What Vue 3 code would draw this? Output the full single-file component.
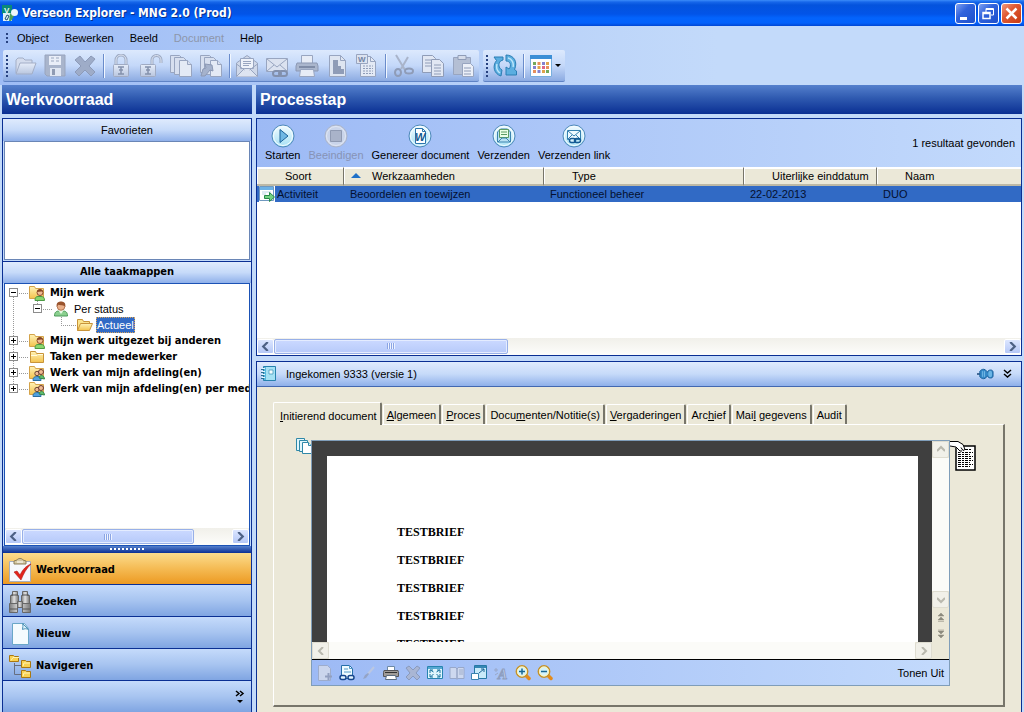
<script setup>
import { ref } from 'vue'

const menus = [
  { label: 'Object' },
  { label: 'Bewerken' },
  { label: 'Beeld' },
  { label: 'Document', disabled: true },
  { label: 'Help' }
]

const toolGroups = [
  [['open', 'Openen'], ['save', 'Opslaan'], ['delete', 'Verwijderen']],
  [['lock', 'Vergrendelen'], ['unlock', 'Ontgrendelen'], ['pages', 'Versies'], ['pages-edit', 'Versie bewerken']],
  [['mail', 'Mail'], ['mail-link', 'Mail link'], ['print', 'Afdrukken'], ['stamp', 'Sjabloon'], ['word', 'Word']],
  [['cut', 'Knippen'], ['copy', 'Kopiëren'], ['paste', 'Plakken']]
]

const tree = [
  { cells: ['minus first'], icon: 'folder-user', label: 'Mijn werk', bold: true },
  { cells: ['line', 'minus child'], icon: 'user', label: 'Per status' },
  { cells: ['line', '', 'elbow'], icon: 'folder-open', label: 'Actueel', selected: true },
  { cells: ['plus'], icon: 'folder-user', label: 'Mijn werk uitgezet bij anderen', bold: true },
  { cells: ['plus'], icon: 'folder', label: 'Taken per medewerker', bold: true },
  { cells: ['plus'], icon: 'folder-group', label: 'Werk van mijn afdeling(en)', bold: true },
  { cells: ['plus last'], icon: 'folder-group', label: 'Werk van mijn afdeling(en) per medewerker', bold: true }
]

const navItems = [
  { icon: 'clipboard', label: 'Werkvoorraad' },
  { icon: 'binoculars', label: 'Zoeken' },
  { icon: 'new', label: 'Nieuw' },
  { icon: 'hierarchy', label: 'Navigeren' }
]
const activeNav = ref(0)

const actions = [
  { icon: 'a-play', label: 'Starten' },
  { icon: 'a-stop', label: 'Beeindigen', disabled: true },
  { icon: 'a-word', label: 'Genereer document' },
  { icon: 'a-send', label: 'Verzenden' },
  { icon: 'a-link', label: 'Verzenden link' }
]

const tabs = [
  ['', 'I', 'nitierend document'],
  ['', 'A', 'lgemeen'],
  ['', 'P', 'roces'],
  ['Docu', 'm', 'enten/Notitie(s)'],
  ['', 'V', 'ergaderingen'],
  ['Arc', 'h', 'ief'],
  ['Mai', 'l', ' gegevens'],
  ['Audit', '', '']
]
const activeTab = ref(0)

const viewerTools = [
  ['v-add', 'Toevoegen'], ['v-view', 'Bekijken'], ['v-brush', 'Bewerken'], ['v-print', 'Afdrukken'],
  ['v-delete', 'Verwijderen'], ['v-fit', 'Passend'], ['v-book', 'Boek'], ['v-resize', 'Schalen'],
  ['v-text', 'Tekst'], ['v-zoomin', 'Inzoomen'], ['v-zoomout', 'Uitzoomen']
]
</script>

<template>
  <div class="app">
    <svg class="sprite" width="0" height="0" aria-hidden="true">
      <defs>
        <linearGradient id="gFolder" x1="0" y1="0" x2="0" y2="1"><stop offset="0" stop-color="#fff3b8" /><stop offset="1" stop-color="#f3c24c" /></linearGradient>
        <linearGradient id="gBall" x1="0" y1="0" x2="0" y2="1"><stop offset="0" stop-color="#f2fcff" /><stop offset="1" stop-color="#a6e0f4" /></linearGradient>
        <linearGradient id="gGrey" x1="0" y1="0" x2="0" y2="1"><stop offset="0" stop-color="#e6edf9" /><stop offset="1" stop-color="#b9c6df" /></linearGradient>
        <linearGradient id="gSteel" x1="0" y1="0" x2="1" y2="0"><stop offset="0" stop-color="#7d7d7d" /><stop offset=".45" stop-color="#e2e2e2" /><stop offset="1" stop-color="#777" /></linearGradient>
      </defs>

      <symbol id="logo" viewBox="0 0 16 16">
        <path d="M0 0h10v9H0z" fill="#0b8a78" />
        <path d="M1 8h8l1 8H1z" fill="#dff0f6" /><path d="M8 8l4 3-3 5H7z" fill="#4c9f58" />
        <circle cx="12.500" cy="7.500" r="3.500" fill="#eef6fb" />
        <path d="M3 14l2-4 2 1-2 4z" fill="none" stroke="#20506c" />
      </symbol>

      <symbol id="open" viewBox="0 0 24 24"><path d="M3 19V6l2-2h5l2 2h7v3" fill="#d4dced" stroke="#a3aec6" /><path d="M3 20L7 9h16l-4 11z" fill="url(#gGrey)" stroke="#a3aec6" /></symbol>
      <symbol id="save" viewBox="0 0 24 24"><path d="M2 1h20v21H4l-2-2z" fill="#a9b5cc" stroke="#98a4bd" /><path d="M6 2h12v9H6z" fill="#e9eef8" /><path d="M8 4h3M8 7h3M13 4h3M13 7h3" stroke="#9aa7bf" /><path d="M7 14h11v8H7z" fill="#dfe6f2" /><path d="M9 15h3v6H9z" fill="#8f9bb3" /></symbol>
      <symbol id="delete" viewBox="0 0 24 24"><path d="M2 6l5-4 5 6 6-6 4 3-6 7 6 6-4 4-6-6-6 6-4-4 6-6z" fill="#9eacc8" stroke="#8c9ab8" /></symbol>
      <symbol id="lock" viewBox="0 0 24 24"><path d="M7 11V6a5 5 0 0 1 10 0v5" fill="none" stroke="#9eabc4" stroke-width="3" /><path d="M7 11V6a5 5 0 0 1 10 0v5" fill="none" stroke="#dfe6f3" /><rect x="4.500" y="10.500" width="15" height="12" rx="1" fill="url(#gGrey)" stroke="#a0abc3" /><path d="M9 13h6M10 16h4M9 20h6M12 13v7" stroke="#8491ac" stroke-width="1.500" /></symbol>
      <symbol id="unlock" viewBox="0 0 24 24"><path d="M13 11V6a4.500 4.500 0 0 1 9 0v3" fill="none" stroke="#9eabc4" stroke-width="3" /><path d="M13 11V6a4.500 4.500 0 0 1 9 0v3" fill="none" stroke="#dfe6f3" /><rect x="1.500" y="10.500" width="15" height="12" rx="1" fill="url(#gGrey)" stroke="#a0abc3" /><path d="M6 13h6M7 16h4M6 20h6M9 13v7" stroke="#8491ac" stroke-width="1.500" /></symbol>
      <symbol id="pages" viewBox="0 0 24 24"><g fill="#d7dfef" stroke="#98a5c0"><path d="M1.500 1.500h9l3 3v14h-12z" /><path d="M5.500 3.500h9l3 3v14h-12z" /><path d="M10.500 6.500h8l4 4v12h-12z" fill="#e4eaf5" /><path d="M18.500 6.500v4h4" /></g></symbol>
      <symbol id="pages-edit" viewBox="0 0 24 24"><g fill="#d7dfef" stroke="#98a5c0"><path d="M1.500 1.500h9l3 3v14h-12z" /><path d="M5.500 3.500h9l3 3v14h-12z" /><path d="M11.500 6.500h7l4 4v12h-11z" fill="#e4eaf5" /><path d="M18.500 6.500v4h4" /></g><path d="M2 22l2-7 3-1-1-4 7 1 1 6-3-1-5 6z" fill="#a5b2cc" stroke="#8b98b4" /></symbol>
      <symbol id="mail" viewBox="0 0 24 24"><path d="M1.500 9L12 1.500 22.500 9v13.500h-21z" fill="#cfd8e9" stroke="#98a5c0" /><path d="M5.500 4.500h13v10h-13z" fill="#eef2fa" stroke="#98a5c0" /><path d="M8 7.500h8M8 9.500h8M8 11.500h6" stroke="#98a5c0" /><path d="M1.500 22.500l8-8h5l8 8M1.500 10l8 6M22.500 10l-8 6" fill="#dde4f1" stroke="#98a5c0" /></symbol>
      <symbol id="mail-link" viewBox="0 0 24 24"><path d="M1.500 4.500h21v13h-21z" fill="#dbe2f0" stroke="#98a5c0" /><path d="M2 5l10 8L22 5M2 17l7-6M22 17l-7-6" fill="none" stroke="#98a5c0" /><rect x="8" y="17" width="8" height="5" rx="2.500" fill="none" stroke="#8290ad" stroke-width="2" /><rect x="14" y="17" width="8" height="5" rx="2.500" fill="none" stroke="#8290ad" stroke-width="2" /></symbol>
      <symbol id="print" viewBox="0 0 24 24"><path d="M6.500 1.500h11v9h-11z" fill="#e7ecf6" stroke="#98a5c0" /><path d="M2 9h20l1 3v5H1v-5z" fill="#aab6cd" stroke="#8b98b4" /><path d="M4 12h16v2H4z" fill="#7f8ca7" /><path d="M5.500 15.500h13l1 7h-15z" fill="#e7ecf6" stroke="#98a5c0" /></symbol>
      <symbol id="stamp" viewBox="0 0 24 24"><path d="M4.500 1.500h11l5 5v16h-16z" fill="#dee5f1" stroke="#98a5c0" /><path d="M15.500 1.500v5h5" fill="none" stroke="#98a5c0" /><path d="M8 6h5v6h3v3h3v5H8z" fill="#8f9cb7" /></symbol>
      <symbol id="word" viewBox="0 0 24 24"><path d="M5.500 2.500h10l5 5v15h-15z" fill="#e4eaf5" stroke="#98a5c0" /><path d="M15.500 2.500v5h5" fill="none" stroke="#98a5c0" /><path d="M8 12h10M8 14.500h10M8 17h10M8 19.500h10" stroke="#8f9cb7" stroke-dasharray="2 1" /><path d="M1.500.5h11v9h-11z" fill="#dce3f0" stroke="#98a5c0" /></symbol>
      <symbol id="cut" viewBox="0 0 24 24"><path d="M5 1l9 15M17 3L10 15" stroke="#a9b4ca" stroke-width="2" /><ellipse cx="7" cy="18.500" rx="3" ry="3.500" fill="none" stroke="#8f9cb7" stroke-width="2" /><ellipse cx="18" cy="17" rx="4" ry="2.500" fill="none" stroke="#8f9cb7" stroke-width="2" /></symbol>
      <symbol id="copy" viewBox="0 0 24 24"><g fill="#e1e7f3" stroke="#8f9cb7"><path d="M1.500 1.500h10l3 3v14h-13z" /><path d="M10.500 5.500h8l4 4v13h-12z" /></g><path d="M4 6h6M4 9h6M4 12h6M13 11h7M13 14h7M13 17h7M13 20h7" stroke="#8f9cb7" /></symbol>
      <symbol id="paste" viewBox="0 0 24 24"><path d="M2.500 3.500h17v17h-17z" fill="#b4bfd4" stroke="#98a5c0" /><path d="M7 1.500h8v4H7z" fill="#d5dcea" stroke="#8f9cb7" /><path d="M11.500 9.500h8l3 3v10h-11z" fill="#ebeff8" stroke="#98a5c0" /><path d="M13 14h7M13 17h7M13 20h7" stroke="#8f9cb7" /></symbol>
      <symbol id="refresh" viewBox="0 0 24 24"><g fill="#5baee0" stroke="#2b7eb4"><path d="M1 3h9v3L7.500 7C5 10 5.500 14 9 16l-1 6C1 20-1 12 3.500 6.500z" /><path d="M13 1c8 0 12 7 8.500 14.500L23.500 17v4H13v-8l3 2c3-4 1-8-3-8z" /></g><path d="M4 10c-1 4 0 7 3 9M15 4c4 1 6 5 5 9" fill="none" stroke="#b9e5fa" stroke-width="1.500" /></symbol>
      <symbol id="calendar" viewBox="0 0 24 24"><path d="M1.500 1.500h21v21h-21z" fill="#fff" stroke="#78aede" /><path d="M1 1h22v4H1z" fill="#3b8fd6" /><g><path d="M4 8h3v3H4zM17 16h3v3h-3z" fill="#74a95c" /><path d="M8.500 8h3v3h-3zM17 12h3v3h-3zM4 16h3v3H4z" fill="#e88f5c" /><path d="M13 8h3v3h-3zM4 12h3v3H4zM8.500 16h3v3h-3z" fill="#8581cf" /><path d="M17 8h3v3h-3zM8.500 12h3v3h-3zM13 16h3v3h-3z" fill="#e1a24c" /><path d="M13 12h3v3h-3z" fill="#dd6688" /></g></symbol>

      <symbol id="folder" viewBox="0 0 16 16"><path d="M1.500 13.500v-11h5l1 2h7v9z" fill="url(#gFolder)" stroke="#c8943a" /><path d="M2 6.500h6l1-1h5" stroke="#fffbe0" fill="none" /></symbol>
      <symbol id="folder-open" viewBox="0 0 16 16"><path d="M.5 13.500v-11h5l1 2h6v3" fill="#fbe48e" stroke="#c8943a" /><path d="M.5 13.500l3-7h12l-3 7z" fill="url(#gFolder)" stroke="#c8943a" /></symbol>
      <symbol id="user" viewBox="0 0 16 16"><path d="M1.500 15c0-4 2-5 4.500-5h4c2.500 0 4.500 1 4.500 5z" fill="#8bd08f" stroke="#4b9a58" /><path d="M5 9l3 4 3-4z" fill="#e8fae6" /><circle cx="8" cy="5.500" r="3.800" fill="#eab08a" stroke="#a5603a" stroke-width=".8" /><path d="M3.700 6C3 1 6 .5 8 .5s5 .5 4.300 5.500C11 3.500 7 5 5 3.500z" fill="#99532d" /></symbol>
      <symbol id="folder-user" viewBox="0 0 16 16"><use href="#folder-back" /><path d="M6 15.500c0-3 1-4 3-4h3c2.500 0 3.500 1 3.500 4z" fill="#8bd66e" stroke="#4b9a44" /><circle cx="11" cy="7.500" r="3" fill="#f0bb93" stroke="#8b4a2d" /><path d="M8 7c0-3 5-4 6 0-2-1-4 0-6 0z" fill="#874522" /></symbol>
      <symbol id="folder-group" viewBox="0 0 16 16"><use href="#folder-back" /><circle cx="8" cy="8.500" r="2.200" fill="#f0bb93" stroke="#6a4734" /><circle cx="12" cy="7" r="2.500" fill="#f0bb93" stroke="#6a3734" /><path d="M4 15.500c0-3 1-4 5-4 3 0 3 2 3 4z" fill="#52a2df" stroke="#286da2" /><path d="M10 13c0-3 5-4 5.500 1z" fill="#61c070" stroke="#34844e" /></symbol>
      <symbol id="folder-back" viewBox="0 0 16 16"><path d="M.5 13.500v-12h5l1 2h8v10z" fill="url(#gFolder)" stroke="#d4a34a" /></symbol>

      <symbol id="clipboard" viewBox="0 0 24 24"><path d="M1.500 3.500h21v20h-21z" fill="#f6f8fc" stroke="#a7aebc" /><path d="M6 6V3l3-1c1-2 5-2 6 0l3 1v3z" fill="#d6c9a4" stroke="#8b7d58" /><path d="M9 4h6" stroke="#fff" /><path d="M6 14l3-1 3 4c3-6 6-9 11-11-5 5-7 9-10 16z" fill="#e2231a" stroke="#b01812" stroke-width=".6" /></symbol>
      <symbol id="binoculars" viewBox="0 0 24 24"><g fill="url(#gSteel)" stroke="#676767"><path d="M4.500 1.500h5v4h1v8h-8v-8h2z" /><path d="M14.500 1.500h5v4h2v8h-8v-8h1z" /><path d="M1.500 13.500h8v9h-8zM14.500 13.500h8v9h-8z" /><path d="M9.500 11.500h5v6h-5z" /></g><path d="M3 5h7M14 5h7M2 19h7M15 19h7" stroke="#555" /></symbol>
      <symbol id="new" viewBox="0 0 24 24"><path d="M4.500 1.500h12l4 5v16h-16z" fill="#f4fbfe" stroke="#69a7c8" /><path d="M14.500 1.500c1 2 0 4 0 6 2-1 4-1 6 0z" fill="#d9f1fa" stroke="#4f93b8" /></symbol>
      <symbol id="hierarchy" viewBox="0 0 24 24"><path d="M6.500 9v11.500h7M6.500 11.500h7" fill="none" stroke="#666e80" /><g fill="#f9d253" stroke="#a97812"><path d="M1.500 7.500v-6h4l1 1h4v5z" /><path d="M13.500 13.500v-7h4l1 1h4v6z" /><path d="M13.500 23.500v-7h4l1 1h4v6z" /></g><path d="M3 6.500l2-3h6M15 12l1-3h6M15 22l1-3h6" stroke="#fff3b0" fill="none" /></symbol>

      <symbol id="ball" viewBox="0 0 24 24"><circle cx="12" cy="12" r="11" fill="url(#gBall)" stroke="#4d88b9" /><circle cx="12" cy="12" r="9.500" fill="none" stroke="#f5fdff" /></symbol>
      <symbol id="a-play" viewBox="0 0 24 24"><use href="#ball" /><path d="M9 5.500l8 6.500-8 6.500z" fill="#6fb8e4" stroke="#1c6299" /></symbol>
      <symbol id="a-stop" viewBox="0 0 24 24"><circle cx="12" cy="12" r="11" fill="#c9d4ea" stroke="#aab4ca" /><circle cx="12" cy="12" r="9.500" fill="none" stroke="#e1e7f3" /><path d="M6.500 6.500h11v11h-11z" fill="#a9b3c9" stroke="#8f9ab2" /></symbol>
      <symbol id="a-word" viewBox="0 0 24 24"><use href="#ball" /><path d="M7.500 4.500h7l3 3v12h-10z" fill="#fff" stroke="#2c76ad" /><path d="M14.500 4.500v3h3" fill="none" stroke="#2c76ad" /></symbol>
      <symbol id="a-send" viewBox="0 0 24 24"><use href="#ball" /><path d="M5.500 8l3-3h7l3 3v10h-13z" fill="#b9e1f3" stroke="#3b84ae" /><path d="M7.500 5.500h9v8h-9z" fill="#edffe5" stroke="#5c9b63" /><path d="M9 8h6M9 10.500h6" stroke="#5c9b63" /><path d="M6 18l4-4h4l4 4" fill="none" stroke="#3b84ae" /></symbol>
      <symbol id="a-link" viewBox="0 0 24 24"><use href="#ball" /><path d="M5.500 6.500h13v9h-13z" fill="#eefaff" stroke="#3480af" /><path d="M6 7l6 5 6-5M6 15l4-4M18 15l-4-4" fill="none" stroke="#3480af" /><rect x="7.500" y="14.500" width="6" height="4" rx="2" fill="#d8f3fd" stroke="#155b94" stroke-width="1.500" /><rect x="12.500" y="14.500" width="6" height="4" rx="2" fill="none" stroke="#155b94" stroke-width="1.500" /></symbol>
      <symbol id="activity" viewBox="0 0 16 16"><path d="M.5.5h14v14H.5z" fill="#fff" stroke="#6f98bf" /><path d="M1 1h13v3H1z" fill="#6db2e6" /><path d="M3 6h9M3 8h4" stroke="#bfd4e5" /><path d="M5.500 9.500h5v-3l5 4.500-5 4.500v-3h-5z" fill="#74d183" stroke="#258848" /></symbol>
      <symbol id="journal" viewBox="0 0 16 16"><path d="M2.500.5h12v14h-12z" fill="#59b7dc" stroke="#2682ad" /><path d="M5 1h9v13H5z" fill="#a5e1f4" /><path d="M8 4h4v4H8z" fill="#f4fdff" stroke="#3b8fb5" stroke-width=".7" /><path d="M1 2.500h3M1 5.500h3M1 8.500h3M1 11.500h3" stroke="#e1f7ff" /><path d="M0 3.500h3M0 6.500h3M0 9.500h3M0 12.500h3" stroke="#2a6f94" /></symbol>
      <symbol id="pin" viewBox="0 0 18 14"><path d="M0 7h4" stroke="#123e70" stroke-width="1.500" /><path d="M3 4c1-1 2-2 4-2 3 0 3 3 4 3 1-3 6-3 6 0v4c0 3-5 3-6 0-1 0-1 3-4 3-2 0-3-1-4-2z" fill="#3588c7" stroke="#175d99" /><ellipse cx="14" cy="7" rx="2" ry="3.500" fill="#6bb5e5" /><path d="M6 4v6M8 4v6" stroke="#77bde9" /></symbol>
      <symbol id="mini-pages" viewBox="0 0 16 16"><g fill="#e1f6fc" stroke="#2f88a8"><path d="M.5.500h8v12h-8z" /><path d="M3.500 2.500h8v11h-8z" /><path d="M6.500 4.500h6l3 3v8h-9z" fill="#fff" /><path d="M12.500 4.500v3h3" /></g></symbol>
      <symbol id="hand-page" viewBox="0 0 26 32"><path d="M6 6h19v24H6z" fill="#fff" stroke="#000" stroke-width="1.500" /><path d="M15 9.500h7M8 12.500h15M8 14.500h12M8 16.500h15M8 18.500h13M8 20.500h15M8 22.500h12M8 24.500h15M8 26.500h12" stroke="#000" stroke-dasharray="3 1 2 1" /><path d="M0 1.500h8l5 3 2 5-2 1-2-3 1 5-2 0-4-5-6-1z" fill="#fff" /><path d="M0 1.500h8l5 3 2 5-2 1-2-3M12 11l-2 0-4-4-6-1" fill="none" stroke="#000" /></symbol>

      <symbol id="v-add" viewBox="0 0 16 16"><path d="M1.500.5h9l3 3v12h-12z" fill="#cad5ed" stroke="#9daccc" /><path d="M8 11.500h7M11.500 8v7" stroke="#919fc0" stroke-width="2" /></symbol>
      <symbol id="v-view" viewBox="0 0 16 16"><path d="M2.500.5h8l3 3v10h-11z" fill="#effbff" stroke="#256fa9" /><path d="M10.500.5v3h3M5 4h4M5 7h7" fill="none" stroke="#559ac8" /><rect x="1" y="10.500" width="6" height="4" rx="2" fill="#e3f5ff" stroke="#16468d" stroke-width="1.500" /><rect x="9" y="10.500" width="6" height="4" rx="2" fill="#e3f5ff" stroke="#16468d" stroke-width="1.500" /></symbol>
      <symbol id="v-brush" viewBox="0 0 16 16"><path d="M13 2L7 9" stroke="#bbc7e1" stroke-width="2" /><path d="M8 9l-3 4-3 1 2-4 3-2z" fill="#94a3c5" /></symbol>
      <symbol id="v-print" viewBox="0 0 16 16"><path d="M4.500 1.500h7v5h-7z" fill="#fff" stroke="#6d8aa6" /><path d="M1 5.500h14l.5 2v4H.5v-4z" fill="#a09c98" stroke="#56565a" /><path d="M2 7.500h12" stroke="#333" /><path d="M3.500 10.500h9l1 4h-11z" fill="#fff" stroke="#5b6d81" /></symbol>
      <symbol id="v-delete" viewBox="0 0 16 16"><path d="M1 3l3-2 4 4 4-4 3 2-4 5 4 4-3 3-4-4-4 4-3-3 4-4z" fill="#a9b6d4" stroke="#899abd" /></symbol>
      <symbol id="v-fit" viewBox="0 0 16 16"><path d="M.5 1.500h15v12H.5z" fill="#dff6fd" stroke="#2684af" /><path d="M1 2h14v2H1z" fill="#56a8d2" /><path d="M6.500 7l-3-2M9.500 7l3-2M6.500 9l-3 3M9.500 9l3 3M3 8V5h3M10 5h3v3M3 9v3h3M10 12h3V9" fill="none" stroke="#17739f" /></symbol>
      <symbol id="v-book" viewBox="0 0 16 16"><path d="M1 2.500h6l1 1 1-1h6v11H9l-1 1-1-1H1z" fill="#cdd8ef" stroke="#98a8ca" /><path d="M8 3v11" stroke="#7d8db2" /><path d="M10 5h4M10 7h4M10 9h4" stroke="#9eadcb" /></symbol>
      <symbol id="v-resize" viewBox="0 0 16 16"><path d="M3.500.5h12v13h-12z" fill="#c8eafa" stroke="#2578a5" /><path d="M4 1h11v2H4z" fill="#3486b4" /><path d="M.5 8.500h7v6h-7z" fill="#fff" stroke="#3a83af" /><path d="M8 8l5-4M10 4h3v3" fill="none" stroke="#1d6496" /></symbol>
      <symbol id="v-text" viewBox="0 0 16 16"><path d="M1 5h4M3 3v4M2 10l3-2" stroke="#98a7c8" /></symbol>
      <symbol id="lens" viewBox="0 0 16 16"><path d="M11 10.500l3 3" stroke="#e38b1d" stroke-width="3.500" stroke-linecap="round" /><circle cx="7" cy="6.500" r="5.700" fill="#d4f3fc" stroke="#c69228" stroke-width="1.500" /><circle cx="7" cy="6.500" r="4.500" fill="none" stroke="#fff5b9" /></symbol>
      <symbol id="v-zoomin" viewBox="0 0 16 16"><use href="#lens" /><path d="M4 6.500h6M7 3.500v6" stroke="#176793" stroke-width="1.500" /></symbol>
      <symbol id="v-zoomout" viewBox="0 0 16 16"><use href="#lens" /><path d="M4 6.500h6" stroke="#176793" stroke-width="1.500" /></symbol>

      <symbol id="left" viewBox="0 0 8 8"><path d="M6 0L2 4l4 4" fill="none" stroke="currentColor" stroke-width="2" /></symbol>
      <symbol id="right" viewBox="0 0 8 8"><path d="M2 0l4 4-4 4" fill="none" stroke="currentColor" stroke-width="2" /></symbol>
      <symbol id="up" viewBox="0 0 8 8"><path d="M0 6l4-4 4 4" fill="none" stroke="currentColor" stroke-width="2" /></symbol>
      <symbol id="down" viewBox="0 0 8 8"><path d="M0 2l4 4 4-4" fill="none" stroke="currentColor" stroke-width="2" /></symbol>
    </svg>

    <header class="titlebar">
      <svg class="i16"><use href="#logo" /><text x="2" y="8" class="glyph logo-glyph">V</text></svg>
      <h1>Verseon Explorer - MNG 2.0 (Prod)</h1>
      <div class="winbtns">
        <button aria-label="Minimaliseren"><svg viewBox="0 0 21 21"><path d="M5 14h7v3H5z" fill="#fff" /></svg></button>
        <button aria-label="Vorig formaat"><svg viewBox="0 0 21 21"><path d="M8 9V5.500h7.500V12H13M8 6.500h7" fill="none" stroke="#fff" /><path d="M5 9.500h7v6H5zM5 10.500h7" fill="none" stroke="#fff" stroke-width="1.500" /></svg></button>
        <button class="close" aria-label="Sluiten"><svg viewBox="0 0 21 21"><path d="M5.500 5.500l10 10M15.500 5.500l-10 10" stroke="#fff" stroke-width="2.500" /></svg></button>
      </div>
    </header>

    <nav class="menubar">
      <span class="grip menu-grip"></span>
      <button v-for="m in menus" :key="m.label" :disabled="m.disabled">{{ m.label }}</button>
    </nav>

    <div class="toolbars">
      <div class="toolbar">
        <span class="grip"></span>
        <div v-for="(group, g) in toolGroups" :key="g" class="tool-group">
          <button v-for="[icon, name] in group" :key="icon" :aria-label="name"><svg class="i24"><use :href="'#' + icon" /><text v-if="icon === 'word'" x="3" y="8" class="glyph word-glyph">W</text></svg></button>
        </div>
      </div>
      <div class="toolbar second">
        <span class="grip"></span>
        <div class="tool-group"><button aria-label="Vernieuwen"><svg class="i24"><use href="#refresh" /></svg></button></div>
        <div class="tool-group"><button class="drop" aria-label="Agenda"><svg class="i24"><use href="#calendar" /></svg><span class="caret"></span></button></div>
      </div>
    </div>

    <div class="body">
      <aside class="column sidebar">
        <h2 class="heading">Werkvoorraad</h2>
        <div class="side-box">
          <h3 class="bar">Favorieten</h3>
          <div class="favorites"></div>
          <h3 class="bar strong">Alle taakmappen</h3>
          <div class="tree-box">
            <ul class="tree">
              <li v-for="row in tree" :key="row.label">
                <span v-for="(cell, c) in row.cells" :key="c" class="cell" :class="cell">
                  <button v-if="cell.includes('minus') || cell.includes('plus')" :aria-label="row.label"></button>
                </span>
                <svg class="i16"><use :href="'#' + row.icon" /></svg>
                <span class="node" :class="{ strong: row.bold, selected: row.selected }">{{ row.label }}</span>
              </li>
            </ul>
            <div class="scroll">
              <button aria-label="Links"><svg><use href="#left" /></svg></button>
              <div class="track"><div class="thumb wide"><i></i></div></div>
              <button aria-label="Rechts"><svg><use href="#right" /></svg></button>
            </div>
          </div>
          <div class="splitter"><span></span></div>
          <button v-for="(item, n) in navItems" :key="item.label" class="nav" :class="{ active: n === activeNav }" @click="activeNav = n">
            <svg class="i24"><use :href="'#' + item.icon" /></svg>{{ item.label }}
          </button>
          <div class="nav overflow">
            <button aria-label="Meer knoppen"><svg viewBox="0 0 10 14"><path d="M1 1l3 2.500L1 6M5 1l3 2.500L5 6" fill="none" stroke="#000" stroke-width="1.500" /><path d="M2 10h6l-3 3z" /></svg></button>
          </div>
        </div>
      </aside>

      <main class="column">
        <h2 class="heading">Processtap</h2>
        <section class="results">
          <div class="actions">
            <button v-for="a in actions" :key="a.label" :disabled="a.disabled"><svg class="i24"><use :href="'#' + a.icon" /><text v-if="a.icon === 'a-word'" x="7" y="17" class="glyph action-glyph">W</text></svg>{{ a.label }}</button>
            <p>1 resultaat gevonden</p>
          </div>
          <table>
            <colgroup><col class="c1" /><col class="c2" /><col class="c2" /><col class="c3" /><col /></colgroup>
            <thead>
              <tr><th>Soort</th><th class="sorted">Werkzaamheden</th><th>Type</th><th>Uiterlijke einddatum</th><th>Naam</th></tr>
            </thead>
            <tbody>
              <tr><td class="kind"><svg class="i16"><use href="#activity" /></svg>Activiteit</td><td>Beoordelen en toewijzen</td><td>Functioneel beheer</td><td>22-02-2013</td><td>DUO</td></tr>
            </tbody>
          </table>
          <div class="scroll">
            <button aria-label="Links"><svg><use href="#left" /></svg></button>
            <div class="track"><div class="thumb"><i></i></div></div>
            <button aria-label="Rechts"><svg><use href="#right" /></svg></button>
          </div>
        </section>

        <section class="detail">
          <header class="detail-bar">
            <svg class="i16"><use href="#journal" /></svg>
            <h3>Ingekomen 9333 (versie 1)</h3>
            <button aria-label="Vastzetten"><svg class="pin"><use href="#pin" /></svg></button>
            <button aria-label="Inklappen"><svg class="chev" viewBox="0 0 9 10"><path d="M1 1l3.500 3L8 1M1 5l3.500 3L8 5" fill="none" stroke="#000" stroke-width="1.500" /></svg></button>
          </header>
          <div class="tabs" role="tablist">
            <button v-for="(t, n) in tabs" :key="n" role="tab" :aria-selected="n === activeTab" :class="{ active: n === activeTab }" @click="activeTab = n">{{ t[0] }}<u>{{ t[1] }}</u>{{ t[2] }}</button>
          </div>
          <div class="tab-panel">
            <svg class="versions"><use href="#mini-pages" /></svg>
            <div class="viewer">
              <div class="canvas">
                <div class="page"><p v-for="n in 5" :key="n">TESTBRIEF</p></div>
              </div>
              <div class="vscroll">
                <button aria-label="Omhoog"><svg><use href="#up" /></svg></button>
                <div class="vtrack"></div>
                <button aria-label="Omlaag"><svg><use href="#down" /></svg></button>
                <button class="flat" aria-label="Vorige pagina"><svg viewBox="0 0 8 10"><path d="M1 4l3-3 3 3zM1 8l3-3 3 3zM1 9.500h6" fill="#8c8a7e" stroke="#8c8a7e" stroke-width=".5" /></svg></button>
                <button class="flat" aria-label="Volgende pagina"><svg viewBox="0 0 8 10"><path d="M1 1h6M1 2l3 3 3-3zM1 6l3 3 3-3z" fill="#8c8a7e" stroke="#8c8a7e" stroke-width=".5" /></svg></button>
              </div>
              <div class="hscroll">
                <button aria-label="Links"><svg><use href="#left" /></svg></button>
                <div class="htrack"></div>
                <button aria-label="Rechts"><svg><use href="#right" /></svg></button>
              </div>
              <div class="viewer-tools">
                <button v-for="[icon, name] in viewerTools" :key="icon" :aria-label="name"><svg class="i16"><use :href="'#' + icon" /><text v-if="icon === 'v-text'" x="5" y="14" class="glyph text-glyph">A</text></svg></button>
                <button class="toggle-view">Tonen Uit</button>
              </div>
            </div>
            <svg class="hand"><use href="#hand-page" /></svg>
          </div>
        </section>
      </main>
    </div>
  </div>
</template>

<style>
html, body { height: 100%; overflow: hidden; }
#app { height: 100%; }
</style>

<style scoped>
* { box-sizing: border-box; }
.app { height: 100%; display: flex; flex-direction: column; font: 11px/14px "Liberation Sans", Arial, sans-serif; color: #000; background: linear-gradient(90deg, #9ebcf5, #c3dafa 70%); }
button { font: inherit; color: inherit; border: 0; padding: 0; margin: 0; background: none; display: flex; align-items: center; justify-content: center; }
h1, h2, h3, p, ul { margin: 0; padding: 0; }
h2, h3 { font-weight: normal; }
svg { display: block; flex: none; }
.sprite { position: absolute; }
.i16 { width: 16px; height: 16px; }
.i24 { width: 24px; height: 24px; }
.glyph { font-family: "Liberation Sans", Arial, sans-serif; font-weight: bold; }
.logo-glyph { font-size: 8px; fill: #e8fbf4; }
.word-glyph { font-size: 8px; fill: #7283a4; }
.action-glyph { font-size: 11px; font-style: italic; fill: #13588f; }
.text-glyph { font: italic bold 14px "Liberation Serif", serif; fill: #c5d1ea; stroke: #8e9ebf; stroke-width: 1px; }

.titlebar { flex: none; height: 26px; display: flex; align-items: center; gap: 4px; padding: 0 2px; background: linear-gradient(#3b8cf9 0, #1767ea 2px, #0453dd 5px, #0254e8 14px, #0364fd 18px, #0361fb 23px, #0147d4); }
h1 { flex: 1; font: bold 12px/16px "DejaVu Sans Condensed", "DejaVu Sans", sans-serif; color: #fff; text-shadow: 1px 1px #06308c; }
.winbtns { display: flex; gap: 2px; }
.winbtns button { width: 21px; height: 21px; border: 1px solid #fff; border-radius: 3px; background: linear-gradient(135deg, #7ea0f2, #3163dc 40%, #1e50cb); }
.winbtns svg { width: 21px; height: 21px; }
.winbtns .close { background: linear-gradient(135deg, #ee9a7d, #e05a34 40%, #c63a12); }

.menubar { flex: none; height: 24px; display: flex; align-items: center; gap: 16px; padding-left: 6px; }
.menubar button:disabled { color: #8d96aa; }
.grip { width: 2px; height: 22px; background: repeating-linear-gradient(#27417f 0 2px, transparent 2px 4px); }
.menu-grip { height: 10px; margin-right: -7px; }

.toolbars { flex: none; display: flex; gap: 4px; padding-left: 3px; height: 35px; }
.toolbar { display: flex; align-items: center; height: 32px; padding: 0 1px 0 3px; border-radius: 2px; border-bottom: 1px solid #5f83c5; background: linear-gradient(#dce9fd, #c4d8f9 50%, #8cabe2); }
.toolbar .grip { margin-right: 2px; }
.tool-group { display: flex; }
.tool-group + .tool-group { margin-left: 3px; padding-left: 2px; border-left: 1px solid #6a8ccb; box-shadow: inset 1px 0 #f1f7ff; }
.tool-group button { width: 30px; height: 24px; }
.tool-group .drop { width: 38px; gap: 2px; }
.caret { border: 3px solid transparent; border-top-color: #000; border-bottom: 0; }

.body { flex: 1; min-height: 0; display: flex; gap: 4px; padding: 0 2px; background: #c3daf9; }
.column { flex: 1; min-width: 0; display: flex; flex-direction: column; }
.sidebar { flex: none; width: 250px; }
.heading { flex: none; height: 29px; margin-bottom: 4px; padding-left: 4px; font-weight: bold; font-size: 16px; line-height: 29px; color: #fff; background: linear-gradient(#5580cd, #2f5ab0 45%, #0a2f93); }
.side-box { flex: 1; min-height: 0; display: flex; flex-direction: column; border: 1px solid #0a2f93; border-bottom: 0; background: #c3daf9; }
.bar { flex: none; height: 22px; font-size: 11px; line-height: 22px; text-align: center; background: linear-gradient(#dfebfd, #c6daf9 50%, #8fb0ea); }
.strong { font: bold 11px/18px "DejaVu Sans Condensed", "DejaVu Sans", sans-serif; }
.bar.strong { line-height: 20px; height: 22px; }
.favorites { flex: none; height: 119px; margin: 0 1px 1px; border: 1px solid #6a86b6; background: #fff; }
.favorites + .bar { border-top: 1px solid #0a2f93; }
.tree-box { flex: 1; min-height: 0; display: flex; flex-direction: column; margin: 0 1px; border: 1px solid #1b52b5; background: #fff; }
.tree { flex: 1; min-height: 0; overflow: hidden; list-style: none; padding-top: 1px; }
.tree li { display: flex; height: 16px; white-space: nowrap; }
.node { margin-left: 4px; padding: 0 1px; line-height: 16px; }
.node.strong { line-height: 16px; }
.node.selected { margin-left: 3px; color: #fff; background: #316ac5; outline: 1px dotted #d9a45c; outline-offset: -1px; }
.cell { flex: none; width: 24px; height: 16px; padding: 3px 0 0 4px; background-repeat: no-repeat; }
.line { background-image: repeating-linear-gradient(#999 0 1px, transparent 1px 2px); background-size: 1px 16px; background-position: 8px 0; }
.plus, .minus, .elbow { background-image: repeating-linear-gradient(90deg, #999 0 1px, transparent 1px 2px), repeating-linear-gradient(#999 0 1px, transparent 1px 2px); background-size: 16px 1px, 1px 16px; background-position: 8px 8px, 8px 0; }
.first { background-size: 16px 1px, 1px 8px; background-position: 8px 8px, 8px 8px; }
.last, .elbow, .child { background-size: 16px 1px, 1px 8px; }
.cell button { width: 9px; height: 9px; border: 1px solid #8c8c8c; background: linear-gradient(#000, #000) center / 5px 1px no-repeat #fff; }
.plus button { background: linear-gradient(#000, #000) center / 5px 1px no-repeat, linear-gradient(#000, #000) center / 1px 5px no-repeat #fff; }

.scroll { flex: none; height: 17px; display: flex; padding: 1px 0; background: linear-gradient(#f1f0ea, #fdfdfb); }
.scroll button { width: 17px; border: 1px solid #fff; border-radius: 2px; color: #4d6185; background: linear-gradient(#dce6ff, #b5c8f7); }
.scroll svg { width: 9px; height: 9px; }
.track { flex: 1; }
.thumb { width: 32%; height: 15px; display: flex; align-items: center; justify-content: center; border: 1px solid #98b0e8; border-radius: 2px; box-shadow: inset 0 0 0 1px #e4ecff; background: linear-gradient(#cbd9ff, #b7cafa); }
.thumb.wide { width: 82%; }
.thumb i { width: 8px; height: 6px; background: repeating-linear-gradient(90deg, #8ba5e4 0 1px, #eef3ff 1px 2px); }

.splitter { flex: none; height: 7px; display: flex; justify-content: center; background: linear-gradient(#5580cd, #0a2f93); }
.splitter span { width: 35px; height: 2px; margin-top: 2px; background: repeating-linear-gradient(90deg, #fff 0 2px, transparent 2px 4px); }
.nav { flex: none; width: 100%; height: 32px; justify-content: flex-start; gap: 4px; padding: 2px 0 0 5px; font: bold 11px/16px "DejaVu Sans Condensed", "DejaVu Sans", sans-serif; border-bottom: 1px solid #0a2f93; background: linear-gradient(#c5dbfb, #a7c4f0 50%, #80a5e2); }
.nav.active { background: linear-gradient(#fbdc8d, #f5bb54 50%, #ec9a22); }
.overflow { display: flex; justify-content: flex-end; padding: 0 6px 0 0; border-bottom: 0; height: 31px; }
.overflow svg { width: 10px; height: 14px; }

.results { flex: 237 1 0; min-height: 0; margin-bottom: 5px; display: flex; flex-direction: column; border: 1px solid #0a2f93; background: #fff; }
.actions { flex: none; height: 48px; display: flex; align-items: center; padding: 0 6px 0 4px; background: linear-gradient(90deg, #9dbaf5, #c3dafc); }
.actions button { flex-direction: column; height: 38px; padding: 0 4px; }
.actions button:disabled { color: #8793b5; }
.actions p { margin-left: auto; }
table { width: 100%; table-layout: fixed; border-collapse: separate; border-spacing: 0; margin-bottom: auto; }
.c1 { width: 87px; }
.c2 { width: 200px; }
.c3 { width: 133px; }
th { height: 19px; padding: 0 0 0 28px; text-align: left; font-weight: normal; white-space: nowrap; border-top: 1px solid #fff; border-bottom: 2px solid #bdb9a6; border-right: 1px solid #77756a; box-shadow: inset 1px 1px #fff; background: #ebe8d8; }
th:last-child { border-right: 0; }
.sorted { position: relative; }
.sorted::before { content: ""; position: absolute; left: 7px; top: 5px; border: 5px solid transparent; border-bottom-color: #1e70c8; border-top: 0; }
td { height: 16px; padding: 0 0 0 6px; white-space: nowrap; background: #316ac5; color: #04102f; }
.kind { display: flex; align-items: center; gap: 2px; padding-left: 2px; }
.kind svg { background: #fff; }

.detail { flex: 352 1 0; min-height: 0; display: flex; flex-direction: column; border: 1px solid #0a2f93; border-bottom: 0; background: #ebe8d8; }
.detail-bar { flex: none; height: 25px; display: flex; align-items: center; gap: 9px; padding: 0 9px 0 4px; border-bottom: 1px solid #4268b0; background: linear-gradient(#dfebfd, #c6daf9 50%, #8fb0ea); }
.detail-bar h3 { flex: 1; font-size: 11px; }
.pin { width: 17px; height: 14px; }
.chev { width: 9px; height: 10px; }
.tabs { flex: none; display: flex; align-items: flex-end; height: 37px; padding-left: 16px; position: relative; z-index: 1; }
.tabs button { display: block; height: 20px; margin-right: 1px; padding: 2px 3px 0; white-space: pre; border-top: 1px solid #fff; border-left: 1px solid #fff; border-right: 2px solid #77756a; border-radius: 2px 2px 0 0; background: #ebe8d8; }
.tabs .active { height: 23px; margin-bottom: -1px; padding: 4px 3px 0 6px; }
.tab-panel { flex: 1; min-height: 0; display: flex; align-items: flex-start; margin: 0 16px 5px; padding: 15px 27px 19px 22px; border: 1px solid #fff; border-right: 2px solid #77756a; border-bottom: 2px solid #77756a; }
.versions { width: 16px; height: 16px; margin: -2px -1px 0 0; }
.hand { width: 26px; height: 32px; }
.viewer { flex: 1; min-width: 0; align-self: stretch; display: grid; grid-template: minmax(0, 1fr) 17px 26px / minmax(0, 1fr) 17px; border: 1px solid #7f9db9; background: #ebe8d8; }
.canvas { min-height: 0; overflow: hidden; padding: 15px 14px 0 15px; background: #3f3f3f; }
.page { height: 100%; overflow: hidden; padding: 62px 70px 0; background: #fff; font: bold 12px/28px "Liberation Serif", "Times New Roman", serif; }
.vscroll { display: flex; flex-direction: column; }
.vtrack { flex: 1; background: #fbfbf8; }
.hscroll { display: flex; }
.htrack { flex: 1; background: #fbfbf8; }
.vscroll button, .hscroll button { flex: none; width: 17px; height: 17px; border: 1px solid #dedcd0; border-radius: 2px; color: #b9b8ae; background: #f1f0e9; }
.vscroll svg, .hscroll svg { width: 8px; height: 8px; }
.vscroll .flat { border: 0; background: none; }
.vscroll .flat svg { height: 10px; }
.viewer-tools { grid-column: 1 / -1; display: flex; align-items: center; padding: 0 5px 0 2px; border-top: 1px solid #000; background: linear-gradient(90deg, #9dbaf5, #c3dafc); }
.viewer-tools button { width: 22px; }
.viewer-tools .toggle-view { width: auto; margin-left: auto; }
</style>
